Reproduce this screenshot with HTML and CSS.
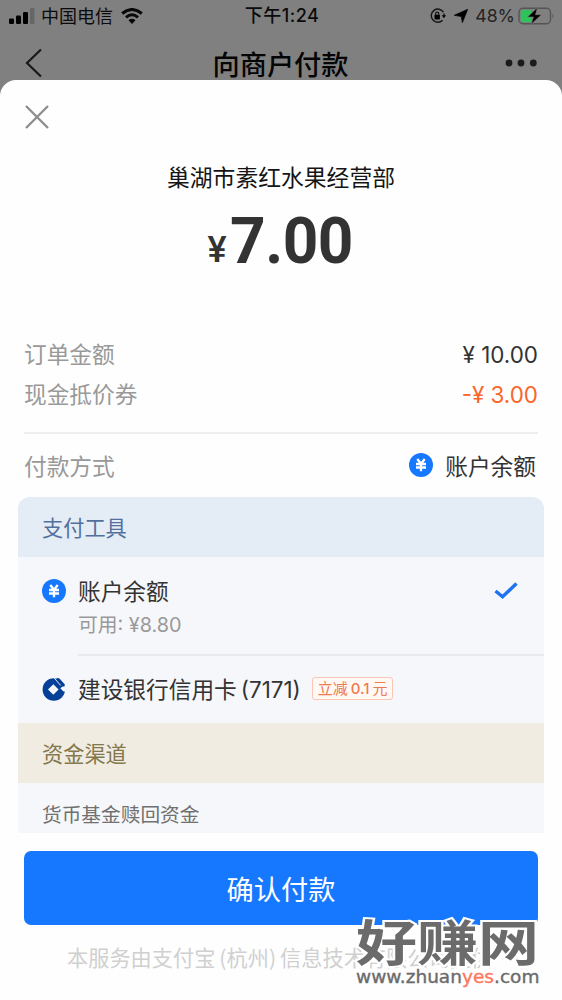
FILE: index.html
```html
<!DOCTYPE html>
<html lang="zh-CN">
<head>
<meta charset="utf-8">
<title>向商户付款</title>
<link rel="stylesheet" href="styles.css">
</head>
<body>
<svg class="defs" width="0" height="0" aria-hidden="true">
  <symbol id="yen" viewBox="0 0 24 24">
    <circle cx="12" cy="12" r="12" fill="#1677ff"/>
    <path d="M8.300 6 12 10.800 15.700 6M12 10.500v7.800M7 11h10M7 14.500h10" fill="none" stroke="#fff" stroke-width="2.300"/>
  </symbol>
</svg>
<div class="screen">
  <header class="status">
    <div class="status-left">
      <svg class="signal" width="26" height="16" viewBox="0 0 26 16"><rect x="0" y="10.500" width="5" height="5.500" rx="1.200"/><rect x="7" y="7.500" width="5" height="8.500" rx="1.200"/><rect x="14" y="4" width="5" height="12" rx="1.200"/><rect x="21" y="0" width="4.500" height="16" rx="1.200" fill="#666"/></svg>
      <span class="carrier">中国电信</span>
      <svg class="wifi" width="22" height="16" viewBox="0 0 22 16" fill="none" stroke="#080808" stroke-width="3"><path d="M1.200 5.500Q11-2.500 20.800 5.500"/><path d="M5 9.300Q11 4.300 17 9.300"/><path d="M7.500 12.200Q11 9.400 14.500 12.200L11 16Z" fill="#080808" stroke="none"/></svg>
    </div>
    <div class="clock">下午1:24</div>
    <div class="status-right">
      <svg width="16" height="16" viewBox="0 0 16 16"><path d="M13.500 4.200A6.600 6.600 0 1 0 12.600 12.300M14 5.500V9" fill="none" stroke="#151515" stroke-width="1.400"/><path d="M11.800 7.300h4.200l-2.100 3z"/><rect x="4.500" y="6.800" width="5.400" height="4.600" rx=".7"/><path d="M5.600 7V5.700a1.600 1.600 0 0 1 3.200 0V7" fill="none" stroke="#151515" stroke-width="1.200"/></svg>
      <svg class="arrow" width="14" height="14" viewBox="0 0 14 14"><path d="M13.700.3 8.400 13.600 7.300 7.500.3 6.300Z" stroke="#080808" stroke-width=".8" stroke-linejoin="round"/></svg>
      <span class="percent">48%</span>
      <svg width="37" height="18" viewBox="0 0 37 18"><rect x="1" y="1.200" width="31.500" height="15.600" rx="4" fill="none" stroke="#555" stroke-width="1.400"/><path d="M5 3h8v12H5a2.300 2.300 0 0 1-2.300-2.300V5.300A2.300 2.300 0 0 1 5 3Z" fill="#2fc35c"/><path d="M34.300 6.500q2.500 2.500 0 5Z" fill="#5c5c5c"/><path d="M19.500.5 9.500 10h6L13 17.300 23.500 7.700h-6Z" stroke="#808080" stroke-width=".6"/></svg>
    </div>
  </header>
  <nav class="nav">
    <svg width="18" height="30" viewBox="0 0 18 30" fill="none" stroke="#181818" stroke-width="2.200"><path d="M16 1.500 2 15 16 28.500"/></svg>
    <h1 class="title">向商户付款</h1>
    <svg class="more" width="32" height="8" viewBox="0 0 32 8" fill="#1b1b1b"><circle cx="4" cy="4" r="3.400"/><circle cx="16" cy="4" r="3.400"/><circle cx="28.300" cy="4" r="3.400"/></svg>
  </nav>
  <main class="sheet">
    <svg class="close" width="24" height="24" viewBox="0 0 24 24" stroke="#8d8d8d" stroke-width="2.300"><path d="M1 1 23 23M23 1 1 23"/></svg>
    <div class="merchant">巢湖市素红水果经营部</div>
    <div class="price"><span class="currency">¥</span><span class="amount">7.00</span></div>
    <section class="summary">
      <div class="row"><span class="label">订单金额</span><span class="value">¥ 10.00</span></div>
      <div class="row"><span class="label">现金抵价券</span><span class="value discount">-¥ 3.00</span></div>
    </section>
    <div class="row method"><span class="label">付款方式</span><span class="method-value"><svg width="24" height="24"><use href="#yen"/></svg>账户余额</span></div>
    <section class="panel">
      <h2 class="band tools">支付工具</h2>
      <div class="option balance">
        <svg class="option-icon" width="24" height="24"><use href="#yen"/></svg>
        <div class="option-body">
          <div class="option-name">账户余额</div>
          <div class="available">可用: ¥8.80</div>
        </div>
        <svg class="check" width="24" height="18" viewBox="0 0 24 18" fill="none" stroke="#1f72f2" stroke-width="3.400"><path d="M1.500 9 8.600 14.800 22.500 1.500"/></svg>
      </div>
      <div class="option card">
        <svg class="option-icon" width="24" height="24" viewBox="0 0 24 24"><circle cx="11.800" cy="12.500" r="11.200" fill="#063f98"/><path d="m11.300 7.200 5.300 5.300-5.300 5.300L6 12.500Z" fill="#f6f7fa"/><path d="m18.300 11.300 2.200-1.900H24v5.200h-2.500Z" fill="#f6f7fa"/><path d="m14.500.8 3 .8 5.700 6.400-2.600 1.400Z" fill="#063f98"/><path d="m12.200 1 6.500 7.500" stroke="#e4eaf5" stroke-width="1"/></svg>
        <span class="card-name">建设银行信用卡<span class="digits">(7171)</span></span>
        <span class="tag">立减<span class="tag-number">0.1</span>元</span>
      </div>
      <h2 class="band channels">资金渠道</h2>
      <div class="fund">货币基金赎回资金</div>
    </section>
    <button class="confirm">确认付款</button>
    <footer class="provider">本服务由支付宝<span class="paren">(</span>杭州<span class="paren close-paren">)</span>信息技术有限公司提供</footer>
  </main>
  <div class="watermark">
    <div class="mark-name">好赚网</div>
    <div class="mark-url">www.zhuan<span class="mark-accent">yes</span>.com</div>
  </div>
</div>
</body>
</html>
```
FILE: styles.css
```css
* { box-sizing: border-box; }
body { margin: 0; }
.defs { display: none; }
svg { display: block; flex: none; }
.screen {
  position: relative;
  width: 562px;
  height: 1000px;
  overflow: hidden;
  background: #808080;
  color: #333;
  font-family: "Noto Sans CJK SC", sans-serif;
  white-space: nowrap;
}
.status {
  display: grid;
  grid-template-columns: 1fr auto 1fr;
  align-items: center;
  height: 31px;
  padding: 0 7px 0 9px;
  color: #0b0b0b;
}
.status-left, .status-right { display: flex; align-items: center; }
.carrier { margin: -2px 8px 0 6px; font-size: 18px; line-height: 30px; }
.clock { font: 500 18px/30px Inter, "Noto Sans CJK SC", sans-serif; letter-spacing: .5px; }
.status-right { justify-content: flex-end; }
.arrow { margin: 0 7px 0 8px; }
.percent { margin-right: 3px; font: 17.700px/30px Inter, sans-serif; color: #242424; }
.nav {
  display: flex;
  justify-content: space-between;
  align-items: center;
  height: 49px;
  padding: 0 25px 0 25px;
}
.nav > svg { margin-top: 15px; }
.title { margin: 14px 0 0 13px; font-size: 27.200px; line-height: 36px; font-weight: 500; color: #050505; }
.sheet {
  display: flex;
  flex-direction: column;
  height: 920px;
  padding: 25px 18px 0;
  border-radius: 16px 16px 0 0;
  background: #fefefe;
}
.close { margin-left: 7px; }
.merchant { margin-top: 31px; height: 34px; line-height: 34px; text-align: center; font-size: 22.800px; color: #151515; }
.price { display: flex; justify-content: center; align-items: baseline; height: 78px; margin-top: 7px; font-family: Roboto, sans-serif; color: #333; }
.currency { width: 22px; font-size: 36px; font-weight: 500; line-height: 78px; transform: translateY(-1px); }
.amount { width: 125px; font-size: 65px; font-weight: 700; line-height: 80px; letter-spacing: -.5px; transform: scaleX(.955); transform-origin: left; }
.summary { height: 155px; margin: 0 6px; padding-top: 55px; border-bottom: 2px solid #eee; }
.row { display: flex; justify-content: space-between; align-items: center; height: 40px; font-size: 22.700px; }
.label { margin-top: -1px; color: #999; }
.value { font-family: Inter, sans-serif; font-size: 22.400px; }
.discount { color: #f9662b; }
.method { margin: 0 6px; height: 62px; }
.method .label { margin-top: 0; }
.method-value { display: flex; align-items: center; gap: 12px; margin-right: 2px; }
.panel { flex: none; height: 336px; margin-top: 1px; overflow: hidden; border-radius: 12px 12px 0 0; background: #f6f7fa; }
.band { height: 60px; margin: 0; padding-left: 24px; font-size: 21.200px; line-height: 59px; font-weight: 400; }
.tools { background: #e4ecf5; color: #526f9e; }
.channels { background: #f1ece1; color: #83784e; }
.option { display: flex; padding-left: 24px; }
.option-body { flex: 1; height: 99px; margin-left: 12px; padding-top: 17px; border-bottom: 2px solid #e9eaed; }
.balance { position: relative; height: 99px; }
.balance .option-icon { margin-top: 22px; }
.option-name { height: 34px; font-size: 22.700px; line-height: 33px; }
.available { height: 34px; font: 19.800px/34px Inter, "Noto Sans CJK SC", sans-serif; color: #999; }
.check { position: absolute; right: 26px; top: 25px; }
.card { align-items: center; height: 67px; font-size: 22.700px; }
.card .option-icon { margin-top: -2px; }
.card-name { margin: -2px 0 0 12px; }
.digits { margin-left: 4px; font-family: Inter, sans-serif; font-size: 22.400px; }
.tag { margin: -2px 0 0 11px; height: 23px; padding: 0 5px; border: 1px solid #fac6b6; border-radius: 3px; background: #fff8f5; color: #ed7b4f; font-size: 15px; line-height: 20px; }
.tag-number { margin: 0 3px; font-family: Inter, sans-serif; font-weight: 500; }
.fund { padding-left: 24px; height: 50px; font-size: 19.700px; line-height: 61px; color: #707070; }
.confirm { flex: none; height: 74px; margin: 18px 6px 0; padding: 0; border: 0; border-radius: 7px; background: #1677ff; color: #fff; font: 27.200px/73px "Noto Sans CJK SC", sans-serif; }
.provider { height: 64px; margin-left: 49px; font-size: 21.200px; line-height: 63px; color: #d0d0d0; }
.paren { margin: 0 0 0 4px; }
.close-paren { margin: 0 4px 0 0; }
.watermark { position: absolute; left: 356px; top: 916px; color: #6b6b6b; }
.mark-name { width: 147px; height: 50px; font-size: 49px; line-height: 48px; font-weight: 700; -webkit-text-stroke: 4px #fff; paint-order: stroke; transform: scaleX(1.245); transform-origin: left; }
.mark-url { height: 22px; font: 500 17px/22px "DejaVu Sans", sans-serif; -webkit-text-stroke: .35px; transform: scaleX(1.09); transform-origin: left; }
.mark-accent { color: #ff765c; }
```
